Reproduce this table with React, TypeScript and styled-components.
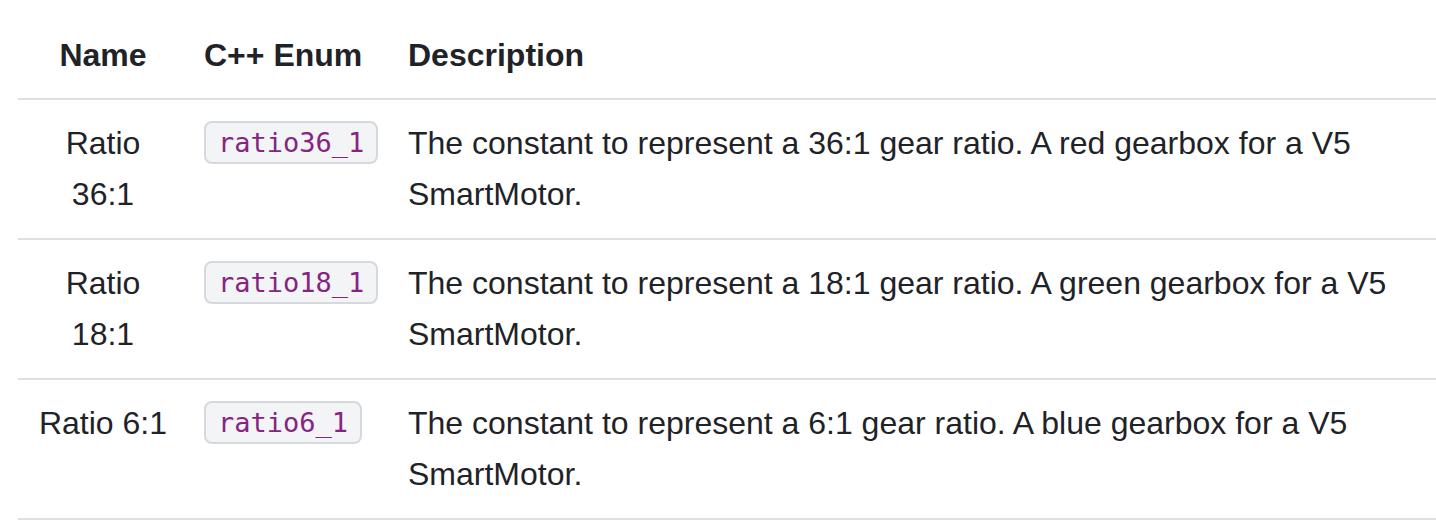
import { createGlobalStyle, styled } from 'styled-components';

const GlobalStyle = createGlobalStyle`
    html, body {
        margin: 0;
        padding: 0;
        background: #ffffff;
    }
    body {
        font-family: 'Liberation Sans', Arial, Helvetica, sans-serif;
        color: #1f2328;
    }
`;

const S = {
    Page: styled.div`
        padding: 13px 0 0 18px;
    `,
    Table: styled.table`
        width: 100%;
        border-collapse: collapse;
        table-layout: fixed;
        font-size: 32px;
        line-height: 51px;
    `,
    HeadCell: styled.th<{ $align?: 'left' | 'center'; $width?: number }>`
        box-sizing: border-box;
        padding: 17px 16px;
        font-weight: 700;
        text-align: ${({ $align }) => $align ?? 'left'};
        width: ${({ $width }) => ($width ? `${$width}px` : 'auto')};
        vertical-align: top;
    `,
    Row: styled.tr`
        border-top: 2px solid #dde1e6;
        &:last-child {
            border-bottom: 2px solid #dde1e6;
        }
    `,
    NameCell: styled.td`
        padding: 18px 20px;
        text-align: center;
        vertical-align: top;
    `,
    EnumCell: styled.td`
        padding: 18px 16px;
        vertical-align: top;
    `,
    DescCell: styled.td`
        padding: 18px 30px 18px 16px;
        vertical-align: top;
    `,
    Code: styled.code`
        display: inline-block;
        vertical-align: top;
        margin-top: 3px;
        padding: 2px 12px;
        font-family: 'DejaVu Sans Mono', 'Liberation Mono', monospace;
        font-size: 27px;
        line-height: 35px;
        color: #862383;
        background: #f3f4f6;
        border: 2px solid #d5d9de;
        border-radius: 8px;
    `,
};

const ratios = [
    { name: 'Ratio 36:1', code: 'ratio36_1', ratio: '36:1', color: 'red' },
    { name: 'Ratio 18:1', code: 'ratio18_1', ratio: '18:1', color: 'green' },
    { name: 'Ratio 6:1', code: 'ratio6_1', ratio: '6:1', color: 'blue' },
];

export default function App() {
    return (
        <>
            <GlobalStyle />
            <S.Page>
                <S.Table>
                    <thead>
                        <tr>
                            <S.HeadCell $align="center" $width={170}>
                                Name
                            </S.HeadCell>
                            <S.HeadCell $width={204}>C++ Enum</S.HeadCell>
                            <S.HeadCell>Description</S.HeadCell>
                        </tr>
                    </thead>
                    <tbody>
                        {ratios.map(({ name, code, ratio, color }) => (
                            <S.Row key={code}>
                                <S.NameCell>{name}</S.NameCell>
                                <S.EnumCell>
                                    <S.Code>{code}</S.Code>
                                </S.EnumCell>
                                <S.DescCell>
                                    The constant to represent a {ratio} gear
                                    ratio. A {color} gearbox for a V5
                                    SmartMotor.
                                </S.DescCell>
                            </S.Row>
                        ))}
                    </tbody>
                </S.Table>
            </S.Page>
        </>
    );
}
